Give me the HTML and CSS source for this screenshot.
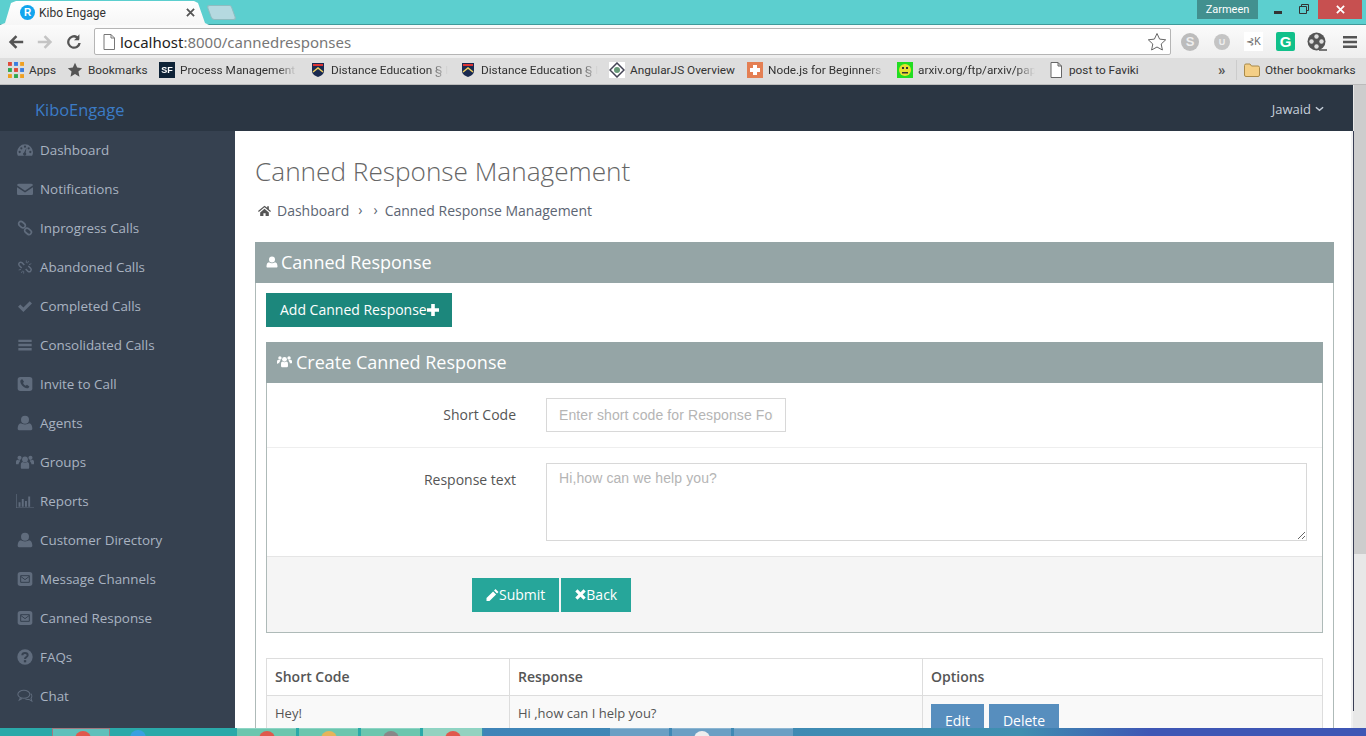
FILE: index.html
```html
<!DOCTYPE html>
<html lang="en">
<head>
    <meta charset="UTF-8">
    <meta name="viewport" content="width=device-width, initial-scale=1.0">
    <title>Kibo Engage</title>
    <link rel="stylesheet" href="styles.css">
</head>
<body>
    <svg class="sprite" xmlns="http://www.w3.org/2000/svg">
        <symbol id="i-dash" viewBox="0 0 24 24"><path d="M12 3.500A12 12 0 0 0 0 15.500c0 2 .5 3.700 1.300 5h21.400c.8-1.300 1.300-3 1.300-5a12 12 0 0 0-12-12z"/><g fill="#364150"><circle cx="4" cy="15" r="1.700"/><circle cx="6.500" cy="9.500" r="1.700"/><circle cx="12" cy="7" r="1.700"/><circle cx="17.500" cy="9.500" r="1.700"/><circle cx="20" cy="15" r="1.700"/><path d="M14.200 8.500l-1.200 7.700a2.400 2.400 0 1 1-2.300-.4z"/></g></symbol>
        <symbol id="i-mail" viewBox="0 0 24 24"><path d="M0 6.500A2.500 2.500 0 0 1 2.500 4h19A2.500 2.500 0 0 1 24 6.500L12 14.500z"/><path d="M0 9.200V19a2 2 0 0 0 2 2h20a2 2 0 0 0 2-2V9.200l-12 8z"/></symbol>
        <symbol id="i-link" viewBox="0 0 24 24"><g fill="none" stroke="currentColor" stroke-width="2.600"><rect x="2" y="3.500" width="11" height="7" rx="3.500" transform="rotate(40 7.500 7)"/><rect x="11" y="13.500" width="11" height="7" rx="3.500" transform="rotate(40 16.500 17)"/></g></symbol>
        <symbol id="i-unlink" viewBox="0 0 24 24"><g fill="none" stroke="currentColor" stroke-width="2.200"><path d="M11 9L7.500 5.500a3 3 0 0 0-4.200 4.200L7 13.500"/><path d="M13 15l3.500 3.500a3 3 0 0 0 4.200-4.200L17 10.500"/><path stroke-width="1.200" d="M14 2v4M17.500 3l-2 3.500M21.500 7l-3.500 1.500M2.500 16.500L6 15.500M6.500 21l2-3.500M10 22v-4"/></g></symbol>
        <symbol id="i-check" viewBox="0 0 24 24"><path d="M1.500 13l3.400-3.400 4.700 4.700L19.100 4.800l3.400 3.400L9.600 21z"/></symbol>
        <symbol id="i-bars" viewBox="0 0 24 24"><path d="M2 4h20v3.500H2zM2 10.300h20v3.500H2zM2 16.600h20v3.500H2z"/></symbol>
        <symbol id="i-phone" viewBox="0 0 24 24"><rect x="1" y="1.500" width="22" height="21" rx="4"/><path fill="#364150" d="M8 5l2.500 3.800-1.500 1.700c.8 1.800 2.200 3.300 4.200 4.300l1.700-1.500 3.600 2.500c-.5 2-2 3-3.500 2.700-5-1-9.300-5.200-10-10C4.800 6.800 6 5.400 8 5z"/></symbol>
        <symbol id="i-user" viewBox="0 0 24 24"><circle cx="12" cy="7" r="6"/><path d="M3 23c-1.200 0-2-.8-2-2.200 0-4.300 1.500-7.800 5-8.300 1.300 1 3.300 1.800 6 1.800s4.700-.8 6-1.800c3.500.5 5 4 5 8.300 0 1.400-.8 2.200-2 2.200z"/></symbol>
        <symbol id="i-users" viewBox="0 0 28 24"><circle cx="14" cy="8" r="4.500"/><circle cx="5.500" cy="5.500" r="3.200"/><circle cx="22.500" cy="5.500" r="3.200"/><path d="M7.500 21v-4.500c0-3 1.500-4.500 3-4.500 1 .8 2.200 1.200 3.500 1.200s2.500-.4 3.500-1.200c1.500 0 3 1.500 3 4.500V21c0 .8-.7 1.500-1.500 1.500H9c-.8 0-1.500-.7-1.500-1.500z"/><path d="M0 15v-3c0-2 1-3.500 2.500-3.500 1.500 1 3 1 4 .7-.5 1-.2 2-1 2.800-1 1-1.500 2-1.500 3.500-1.800 0-4 0-4-.5zM28 15v-3c0-2-1-3.500-2.500-3.500-1.500 1-3 1-4 .7.500 1 .2 2 1 2.800 1 1 1.500 2 1.500 3.500 1.800 0 4 0 4-.5z"/></symbol>
        <symbol id="i-chart" viewBox="0 0 28 24"><path d="M0 1h1v21h27v1H0z"/><path d="M4 14h3v7H4zM9 9h3v12H9zM14 12h3v9h-3zM19 5h3v16h-3z"/></symbol>
        <symbol id="i-msg" viewBox="0 0 24 24"><rect x="1" y="1.500" width="22" height="21" rx="4"/><path fill="none" stroke="#364150" stroke-width="1.500" d="M5.500 7h13v10h-13zM5.500 8l6.500 5 6.500-5"/></symbol>
        <symbol id="i-help" viewBox="0 0 24 24"><circle cx="12" cy="12" r="11.500"/><path fill="none" stroke="#364150" stroke-width="3" d="M8 9.500c0-2.500 2-3.500 4-3.500s4 1.200 4 3.300c0 2.700-4 2.700-4 5.700"/><rect x="10.300" y="16.700" width="3.500" height="3.300" fill="#364150"/></symbol>
        <symbol id="i-chat" viewBox="0 0 28 24"><g fill="none" stroke="currentColor" stroke-width="1.800"><ellipse cx="12" cy="9" rx="10.500" ry="7"/><path d="M6 15l-2 4 5-2.500"/><path d="M24 8c2.500 2.500 2.500 6 .5 8l1.500 5-5-3c-2 .3-4.500.2-6.500-1"/></g></symbol>
        <symbol id="i-home" viewBox="0 0 24 24"><path d="M12 3L0 13l1.500 1.800L12 6l10.500 8.800L24 13l-4-3.400V4h-3v3zM4 15.500V22h6v-5h4v5h6v-6.500L12 8.700z"/></symbol>
        <symbol id="i-plus" viewBox="2 2 20 20"><path d="M9 2h6v7h7v6h-7v7H9v-7H2V9h7z"/></symbol>
        <symbol id="i-pencil" viewBox="2 2 20 20"><path d="M17 2l5 5-2.500 2.500-5-5zM13 6l5 5L7 22H2v-5z"/></symbol>
        <symbol id="i-times" viewBox="2 2 20 20"><path d="M6.500 2.500L12 8l5.500-5.500 4 4L16 12l5.500 5.500-4 4L12 16l-5.500 5.500-4-4L8 12 2.500 6.500z"/></symbol>
    </svg>

    <header class="tabstrip">
        <div class="tab">
            <span class="tab-icon">R</span>
            <span class="tab-title">Kibo Engage</span>
            <svg class="tab-close" viewBox="0 0 10 10"><path d="M1 1l8 8M9 1l-8 8"/></svg>
        </div>
        <div class="newtab"></div>
        <div class="win">
            <span class="win-user">Zarmeen</span>
            <span class="win-min"></span>
            <svg class="win-max" viewBox="0 0 10 10"><path d="M2.500 2.500V.5h7v6h-2M.5 2.500h7v7h-7z"/></svg>
            <span class="win-close"><svg viewBox="0 0 10 10"><path d="M1 1l8 8M9 1l-8 8"/></svg></span>
        </div>
    </header>

    <div class="toolbar">
        <svg class="nav-btn" viewBox="0 0 20 20"><path d="M18 8.500H7.500l4-4L9.500 2.500 2 10l7.500 7.500 2-2-4-4H18z" fill="#555"/></svg>
        <svg class="nav-btn" viewBox="0 0 20 20"><path d="M2 8.500h10.500l-4-4 2-2L18 10l-7.500 7.500-2-2 4-4H2z" fill="#c4c4c4"/></svg>
        <svg class="nav-btn" viewBox="0 0 20 20"><path d="M16 6.500V1.500l-2 2A7.600 7.600 0 1 0 17.500 11h-2.700a5 5 0 1 1-2.500-5.300L10 8h5.500z" fill="#555"/></svg>
        <div class="address">
            <svg class="addr-doc" viewBox="0 0 12 16"><path d="M1 .5h7l3.500 3.500v11.500H1zM8 .5V4h3.500"/></svg>
            <span class="addr-host">localhost</span><span class="addr-path">:8000/cannedresponses</span>
            <svg class="addr-star" viewBox="0 0 20 20"><path d="M10 1.500l2.600 5.600 6.100.7-4.500 4.200 1.200 6-5.400-3-5.400 3 1.200-6L1.300 7.800l6.100-.7z"/></svg>
        </div>
        <div class="exts">
            <span class="ext ext-skype">S</span>
            <span class="ext ext-u">U</span>
            <span class="ext ext-dk">⊰K</span>
            <span class="ext ext-g">G</span>
            <svg class="ext-reel" viewBox="0 0 20 20"><path d="M12 17h8v2h-8z" fill="#777"/><circle cx="9.500" cy="9.500" r="9" fill="#555"/><g fill="#ddd"><circle cx="9.500" cy="4.500" r="2.200"/><circle cx="9.500" cy="14.500" r="2.200"/><circle cx="4.500" cy="9.500" r="2.200"/><circle cx="14.500" cy="9.500" r="2.200"/></g></svg>
            <svg class="ext-menu" viewBox="0 0 14 12"><path d="M0 0h14v2.500H0zM0 4.700h14v2.500H0zM0 9.400h14v2.500H0z" fill="#555"/></svg>
        </div>
    </div>

    <nav class="bookmarks">
        <a class="bm"><svg class="bm-ico" viewBox="0 0 14 14"><path fill="#e04a3a" d="M0 0h3.400v3.400H0z"/><path fill="#3a7de0" d="M5.300 0h3.400v3.400H5.300z"/><path fill="#f0a020" d="M10.600 0H14v3.400h-3.400z"/><path fill="#2fa84f" d="M0 5.300h3.400v3.400H0z"/><path fill="#e04a3a" d="M5.300 5.300h3.400v3.400H5.300z"/><path fill="#3a7de0" d="M10.600 5.300H14v3.400h-3.400z"/><path fill="#f0a020" d="M0 10.600h3.400V14H0z"/><path fill="#2fa84f" d="M5.300 10.600h3.400V14H5.300z"/><path fill="#f0a020" d="M10.600 10.600H14V14h-3.400z"/></svg>Apps</a>
        <a class="bm"><svg class="bm-ico" viewBox="0 0 20 20"><path fill="#555" d="M10 1l2.700 6 6.300.7-4.700 4.300 1.300 6.300-5.600-3.200-5.600 3.200L5.700 12 1 7.700 7.300 7z"/></svg>Bookmarks</a>
        <a class="bm bm-fade"><span class="bm-sf">SF</span>Process Management</a>
        <a class="bm bm-fade"><svg class="bm-ico" viewBox="0 0 16 16"><path fill="#1a2a50" d="M2 1h12v8c0 3-3 5-6 6-3-1-6-3-6-6z"/><path fill="#d33" d="M3 2h10v2H3z"/><path fill="none" stroke="#f0d060" stroke-width="1.500" d="M3 10l5-4 5 4"/></svg>Distance Education § I</a>
        <a class="bm bm-fade"><svg class="bm-ico" viewBox="0 0 16 16"><path fill="#1a2a50" d="M2 1h12v8c0 3-3 5-6 6-3-1-6-3-6-6z"/><path fill="#d33" d="M3 2h10v2H3z"/><path fill="none" stroke="#f0d060" stroke-width="1.500" d="M3 10l5-4 5 4"/></svg>Distance Education § I</a>
        <a class="bm"><svg class="bm-ico" viewBox="0 0 16 16"><path fill="#fff" d="M0 0h16v16H0z"/><path fill="none" stroke="#445" stroke-width="1.500" d="M8 1l7 7-7 7-7-7z"/><circle cx="8" cy="8" r="3" fill="#697"/></svg>AngularJS Overview</a>
        <a class="bm bm-fade"><svg class="bm-ico" viewBox="0 0 16 16"><path fill="#e47f53" d="M0 0h16v16H0z"/><path fill="#fff" d="M6 3h4v3h3v4h-3v3H6v-3H3V6h3z"/></svg>Node.js for Beginners</a>
        <a class="bm bm-fade"><svg class="bm-ico" viewBox="0 0 16 16"><path fill="#22dd22" d="M0 0h16v16H0z"/><circle cx="8" cy="8" r="6" fill="#e8e030"/><path fill="#333" d="M5 5h2v2H5zM9 5h2v2H9zM5 10h6v1.500H5z"/></svg>arxiv.org/ftp/arxiv/pap</a>
        <a class="bm"><svg class="bm-ico" viewBox="0 0 12 16"><path fill="#fff" stroke="#666" d="M1 .5h7l3.500 3.500v11.500H1zM8 .5V4h3.500"/></svg>post to Faviki</a>
        <span class="bm-more">»</span>
        <span class="bm-sep"></span>
        <a class="bm"><svg class="bm-ico" viewBox="0 0 16 14"><path fill="#f4cf86" stroke="#a98a4a" d="M.5 2.500A1.500 1.500 0 0 1 2 1h4l1.500 2H14a1.500 1.500 0 0 1 1.500 1.500V12a1.500 1.500 0 0 1-1.500 1.500H2A1.500 1.500 0 0 1 .5 12z"/></svg>Other bookmarks</a>
    </nav>

    <div class="viewport">
        <div class="app">
            <div class="navbar">
                <a class="brand">KiboEngage</a>
                <a class="account">Jawaid <svg viewBox="0 0 10 6"><path d="M1 1l4 3.500L9 1"/></svg></a>
            </div>
            <div class="app-body">
                <ul class="sidebar">
                    <li><svg class="side-ico"><use href="#i-dash"/></svg>Dashboard</li>
                    <li><svg class="side-ico"><use href="#i-mail"/></svg>Notifications</li>
                    <li><svg class="side-ico"><use href="#i-link"/></svg>Inprogress Calls</li>
                    <li><svg class="side-ico"><use href="#i-unlink"/></svg>Abandoned Calls</li>
                    <li><svg class="side-ico"><use href="#i-check"/></svg>Completed Calls</li>
                    <li><svg class="side-ico"><use href="#i-bars"/></svg>Consolidated Calls</li>
                    <li><svg class="side-ico"><use href="#i-phone"/></svg>Invite to Call</li>
                    <li><svg class="side-ico"><use href="#i-user"/></svg>Agents</li>
                    <li><svg class="side-ico side-ico-wide"><use href="#i-users"/></svg>Groups</li>
                    <li><svg class="side-ico side-ico-wide"><use href="#i-chart"/></svg>Reports</li>
                    <li><svg class="side-ico"><use href="#i-user"/></svg>Customer Directory</li>
                    <li><svg class="side-ico"><use href="#i-msg"/></svg>Message Channels</li>
                    <li><svg class="side-ico"><use href="#i-msg"/></svg>Canned Response</li>
                    <li><svg class="side-ico"><use href="#i-help"/></svg>FAQs</li>
                    <li><svg class="side-ico"><use href="#i-chat"/></svg>Chat</li>
                </ul>
                <main class="content">
                    <h1 class="page-title">Canned Response Management</h1>
                    <div class="crumbs">
                        <svg class="crumb-home"><use href="#i-home"/></svg>
                        <span>Dashboard</span>
                        <span class="crumb-sep">›</span>
                        <span class="crumb-sep crumb-sep2">›</span>
                        <span>Canned Response Management</span>
                    </div>
                    <section class="portlet">
                        <div class="portlet-head"><svg class="head-ico"><use href="#i-user"/></svg>Canned Response</div>
                        <div class="portlet-body">
                            <button class="btn btn-add">Add Canned Response<svg class="btn-ico"><use href="#i-plus"/></svg></button>
                            <section class="portlet portlet-inner">
                                <div class="portlet-head"><svg class="head-ico head-ico-wide"><use href="#i-users"/></svg>Create Canned Response</div>
                                <form class="form">
                                    <div class="form-row form-row-code">
                                        <label class="form-label" for="code">Short Code</label>
                                        <input class="form-input" id="code" type="text" placeholder="Enter short code for Response Form">
                                    </div>
                                    <div class="form-row form-row-text">
                                        <label class="form-label" for="resp">Response text</label>
                                        <textarea class="form-text" id="resp" placeholder="Hi,how can we help you?"></textarea>
                                    </div>
                                    <div class="form-actions">
                                        <button class="btn btn-green" type="button"><svg class="btn-ico btn-ico-lg"><use href="#i-pencil"/></svg>Submit</button>
                                        <button class="btn btn-green" type="button"><svg class="btn-ico btn-ico-sm"><use href="#i-times"/></svg>Back</button>
                                    </div>
                                </form>
                            </section>
                            <table class="table">
                                <thead>
                                    <tr><th class="col-code">Short Code</th><th class="col-resp">Response</th><th>Options</th></tr>
                                </thead>
                                <tbody>
                                    <tr>
                                        <td>Hey!</td>
                                        <td>Hi ,how can I help you?</td>
                                        <td><button class="btn btn-blue">Edit</button><button class="btn btn-blue">Delete</button></td>
                                    </tr>
                                </tbody>
                            </table>
                        </div>
                    </section>
                </main>
            </div>
        </div>
        <div class="scrollbar"><div class="scroll-thumb"></div></div>
    </div>

    <footer class="taskbar">
        <span class="task task-start"></span>
        <span class="task task-active"><i class="dot dot-red"></i></span>
        <span class="task task-plain"><i class="dot dot-blue"></i></span>
        <span class="task task-app"><i class="dot dot-red"></i></span>
        <span class="task task-app"><i class="dot dot-yellow"></i></span>
        <span class="task task-app"><i class="dot dot-grey"></i></span>
        <span class="task task-app task-light"><i class="dot dot-red"></i></span>
        <span class="task task-gap"></span>
        <span class="task task-blue"></span>
        <span class="task task-blue"><i class="dot dot-white"></i></span>
        <span class="task task-blue"></span>
    </footer>
</body>
</html>
```

FILE: styles.css
```css
* {
    box-sizing: border-box;
    padding: 0;
    margin: 0;
}
:root {
    --header: #2b3643;
    --side: #364150;
    --side-text: #a9b3c1;
    --side-icon: #606c7d;
    --grey-head: #95a5a6;
    --teal: #26a69a;
    --line: #ddd;
}
body {
    display: flex;
    flex-direction: column;
    height: 100vh;
    overflow: hidden;
    font-family: "Open Sans", sans-serif;
    font-size: 14px;
    color: #555;
    background: #fff;
}
.sprite {
    position: absolute;
    width: 0;
    height: 0;
}

/* browser chrome */
.tabstrip {
    display: flex;
    flex: 0 0 25px;
    padding-top: 1px;
    background: #5ccfcf;
    box-shadow: inset 0 -1px 0 #3f9a9a;
}
.tab {
    display: flex;
    align-items: center;
    width: 209px;
    padding: 0 14px 1px 20px;
    background: linear-gradient(#fff, #f6f6f6);
    clip-path: polygon(0 100%, 5px 92%, 11px 8%, 16px 0, calc(100% - 15px) 0, calc(100% - 11px) 8%, calc(100% - 4px) 92%, 100% 100%);
}
.tab-icon {
    display: flex;
    align-items: center;
    justify-content: center;
    width: 15px;
    height: 15px;
    margin-right: 4px;
    border-radius: 50%;
    background: #12a5ee;
    color: #fff;
    font: bold 10px "Liberation Sans", sans-serif;
}
.tab-title {
    flex: 1;
    font: 12px Roboto, sans-serif;
    color: #333;
}
.tab-close {
    width: 9px;
    height: 9px;
    fill: none;
    stroke: #555;
    stroke-width: 2;
}
.newtab {
    width: 25px;
    height: 15px;
    margin: 4px 0 0 0;
    background: #b5d9e0;
    border: 1px solid #8fbcc0;
    border-radius: 3px 2px 3px 3px;
    transform: skewX(20deg);
}
.win {
    display: flex;
    align-items: flex-start;
    height: 19px;
    margin: -1px 4px 0 auto;
}
.win-user {
    width: 61px;
    height: 19px;
    margin-right: 16px;
    background: #42908f;
    color: #fff;
    font: 11px/19px Roboto, sans-serif;
    text-align: center;
}
.win-min {
    width: 8px;
    height: 3px;
    margin: 11px 17px 0 0;
    background: #333;
}
.win-max {
    width: 10px;
    height: 10px;
    margin: 4px 9px 0 0;
    fill: none;
    stroke: #333;
}
.win-close {
    display: flex;
    align-items: center;
    justify-content: center;
    width: 44px;
    height: 19px;
    background: #c75050;
}
.win-close svg {
    width: 9px;
    height: 9px;
    fill: none;
    stroke: #fff;
    stroke-width: 2;
}
.toolbar {
    display: flex;
    align-items: center;
    flex: 0 0 33px;
    padding-left: 7px;
    background: linear-gradient(#fbfbfb, #eee);
}
.nav-btn {
    width: 18px;
    height: 18px;
    margin-right: 11px;
}
.address {
    display: flex;
    align-items: center;
    width: 1077px;
    height: 27px;
    padding: 0 3px 0 8px;
    background: #fff;
    border: 1px solid #b5b5b5;
    border-radius: 2px;
    font: 15px "Noto Sans", sans-serif;
}
.addr-doc {
    width: 12px;
    height: 16px;
    margin-right: 5px;
    fill: #fff;
    stroke: #777;
}
.addr-host {
    color: #222;
}
.addr-path {
    color: #777;
}
.addr-star {
    width: 20px;
    height: 20px;
    margin-left: auto;
    fill: #fff;
    stroke: #666;
}
.exts {
    display: flex;
    align-items: center;
    flex: 1;
    padding-left: 10px;
}
.ext {
    display: flex;
    align-items: center;
    justify-content: center;
    font-family: "Liberation Sans", sans-serif;
    font-weight: bold;
}
.ext-skype {
    width: 18px;
    height: 18px;
    margin-right: 15px;
    border-radius: 50%;
    background: #bcbcbc;
    color: #eee;
    font-size: 13px;
}
.ext-u {
    width: 16px;
    height: 16px;
    margin-right: 14px;
    border-radius: 50%;
    background: #c4c4c4;
    color: #eee;
    font-size: 9px;
}
.ext-dk {
    width: 19px;
    height: 19px;
    margin-right: 13px;
    background: #fff;
    color: #666;
    font-size: 10px;
    font-weight: normal;
}
.ext-g {
    width: 19px;
    height: 19px;
    margin-right: 12px;
    border-radius: 2px;
    background: #11c08a;
    color: #fff;
    font-size: 15px;
}
.ext-reel {
    width: 20px;
    height: 20px;
    margin-right: 16px;
}
.ext-menu {
    width: 14px;
    height: 12px;
}
.bookmarks {
    display: grid;
    grid-template-columns: 59px 92px 151px 150px 149px 138px 150px 151px 170px 18px 8px auto;
    align-items: center;
    flex: 0 0 27px;
    padding: 0 0 2px 8px;
    background: #dedede;
    border-bottom: 1px solid #bbb;
    font: 11.8px Roboto, sans-serif;
    color: #333;
    white-space: nowrap;
}
.bm {
    display: flex;
    align-items: center;
    overflow: hidden;
}
.bm-fade {
    width: 138px;
    -webkit-mask-image: linear-gradient(to right, #000 86%, transparent);
    mask-image: linear-gradient(to right, #000 86%, transparent);
}
.bm-ico {
    flex: none;
    width: 16px;
    height: 16px;
    margin-right: 5px;
}
.bm-sf {
    flex: none;
    width: 16px;
    height: 16px;
    margin-right: 5px;
    background: #0d2236;
    color: #fff;
    font: bold 9px/16px "Liberation Sans", sans-serif;
    text-align: center;
}
.bm-more {
    font-size: 15px;
    font-weight: bold;
    line-height: 1;
    color: #555;
}
.bm-sep {
    width: 1px;
    height: 20px;
    background: #ccc;
}

/* page */
.viewport {
    display: flex;
    flex: 1;
    min-height: 0;
}
.app {
    display: flex;
    flex-direction: column;
    flex: 1;
    min-width: 0;
}
.navbar {
    display: flex;
    align-items: center;
    justify-content: space-between;
    flex: 0 0 46px;
    padding: 2px 29px 0 35px;
    background: var(--header);
}
.brand {
    font-size: 16.4px;
    color: #3b7cc7;
}
.account {
    display: flex;
    align-items: center;
    gap: 4px;
    font-size: 13px;
    color: #c6cfda;
}
.account svg {
    width: 9px;
    height: 6px;
    fill: none;
    stroke: #c6cfda;
    stroke-width: 1.600;
}
.app-body {
    display: flex;
    flex: 1;
    min-height: 0;
}
.sidebar {
    flex: 0 0 235px;
    list-style: none;
    background: var(--side);
    color: var(--side-text);
    font-size: 13.4px;
}
.sidebar li {
    display: flex;
    align-items: center;
    height: 39px;
    padding: 0 0 2px 17px;
}
.side-ico {
    flex: none;
    width: 16px;
    height: 16px;
    margin-right: 7px;
    fill: var(--side-icon);
    color: var(--side-icon);
}
.side-ico-wide {
    width: 18px;
    height: 18px;
    margin-left: -1px;
    margin-right: 6px;
}
.content {
    flex: 1;
    min-width: 0;
    padding: 0 20px 0 20px;
    overflow: hidden;
    border-right: 2px solid #f1f1f1;
}
.page-title {
    margin-top: 21px;
    font-size: 26.2px;
    font-weight: 300;
    line-height: 38px;
    color: #666;
}
.crumbs {
    display: flex;
    align-items: center;
    height: 20px;
    margin-top: 10px;
    margin-left: 3px;
    color: #5c6573;
}
.crumb-home {
    width: 13px;
    height: 13px;
    margin-right: 6px;
    fill: #555;
}
.crumb-sep {
    margin: 0 11px 0 9px;
    line-height: 1;
}
.crumb-sep2 {
    margin: 0 7px 0 0;
}
.portlet {
    margin-top: 22px;
    width: 1079px;
    border: 1px solid #aebab8;
    border-top: 0;
}
.portlet-head {
    display: flex;
    align-items: center;
    height: 41px;
    margin: 0 -1px;
    padding: 0 0 2px 11px;
    background: var(--grey-head);
    color: #fff;
    font-size: 18px;
}
.head-ico {
    width: 12px;
    height: 12px;
    margin-right: 3px;
    fill: #fff;
}
.head-ico-wide {
    width: 15px;
    height: 15px;
    margin-right: 4px;
}
.portlet-body {
    padding: 10px 10px 0;
}
.btn {
    display: inline-flex;
    align-items: center;
    height: 34px;
    padding: 0 14px 1px;
    border: 0;
    font: 14px "Open Sans", sans-serif;
    color: #fff;
}
.btn-ico {
    width: 12px;
    height: 12px;
    fill: #fff;
}
.btn-ico-lg {
    width: 13px;
}
.btn-ico-sm {
    width: 11px;
    height: 11px;
}
.btn-add {
    padding-right: 13px;
    background: #1c877c;
}
.portlet-inner {
    width: 1057px;
    margin-top: 15px;
}
.form-row {
    display: flex;
    align-items: flex-start;
    border-bottom: 1px solid #eee;
}
.form-row-code {
    height: 65px;
    padding-top: 15px;
}
.form-row-text {
    height: 109px;
    padding-top: 15px;
    border-bottom: 1px solid #e5e5e5;
}
.form-label {
    flex: 0 0 249px;
    margin-right: 30px;
    padding-top: 7px;
    text-align: right;
    line-height: 20px;
    color: #555;
}
.form-input,
.form-text {
    padding: 6px 12px;
    border: 1px solid #d8d8d8;
    background: #fff;
    font: 14px "Liberation Sans", sans-serif;
    letter-spacing: 0.1px;
    color: #555;
}
.form-input {
    width: 240px;
    height: 34px;
}
.form-text {
    width: 761px;
    height: 78px;
}
.form-input::placeholder,
.form-text::placeholder {
    color: #b5b5b5;
    opacity: 1;
}
.form-actions {
    display: flex;
    gap: 2px;
    height: 75px;
    padding: 21px 0 0 205px;
    background: #f5f5f5;
}
.btn-green {
    background: var(--teal);
}
.table {
    width: 1057px;
    margin-top: 25px;
    border-collapse: collapse;
    table-layout: fixed;
}
.table th,
.table td {
    padding: 8px;
    border: 1px solid var(--line);
    text-align: left;
    vertical-align: top;
    line-height: 20px;
}
.table th {
    font-weight: 600;
    color: #555;
}
.table td {
    font-size: 13px;
    line-height: 18px;
    background: #f9f9f9;
}
.col-code {
    width: 243px;
}
.col-resp {
    width: 413px;
}
.btn-blue {
    margin-right: 5px;
    background: #578ebe;
}
.scrollbar {
    flex: 0 0 13px;
    background: #e8e8e8 linear-gradient(#3a3f55, #3a3f55) 0 46px / 1px 580px no-repeat;
    padding-left: 1px;
}
.scroll-thumb {
    height: 469px;
    background: #cdcdcd;
}

/* windows taskbar */
.taskbar {
    display: flex;
    flex: 0 0 8px;
    gap: 3px;
    overflow: hidden;
    background: linear-gradient(to right, #2aa9a9 0, #2aa9a9 480px, #3f84b8 484px, #3f8fb0 1020px, #3e56b5 1150px, #3e56b5 100%);
}
.task {
    position: relative;
    flex: none;
    width: 59px;
    height: 8px;
}
.task-start {
    width: 49px;
}
.task-active {
    width: 58px;
    background: #5fc0bb;
    border: 1px solid #a07a80;
    border-bottom: 0;
}
.task-plain {
    width: 121px;
    background: transparent;
}
.task-app {
    background: #6cc6ae;
    border-top: 1px solid #8dd5c5;
}
.task-light {
    background: #93d2c0;
}
.task-gap {
    width: 122px;
}
.task-blue {
    background: #6b9fc4;
    border-top: 1px solid #8cb6d2;
}
.dot {
    position: absolute;
    top: 2px;
    left: 22px;
    width: 16px;
    height: 8px;
    border-radius: 8px 8px 0 0;
}
.dot-red {
    background: #e0584c;
}
.dot-blue {
    left: 17px;
    background: #3aa0e0;
}
.dot-yellow {
    background: #e6b45a;
}
.dot-grey {
    background: #888;
}
.dot-white {
    background: #eee;
}
```
